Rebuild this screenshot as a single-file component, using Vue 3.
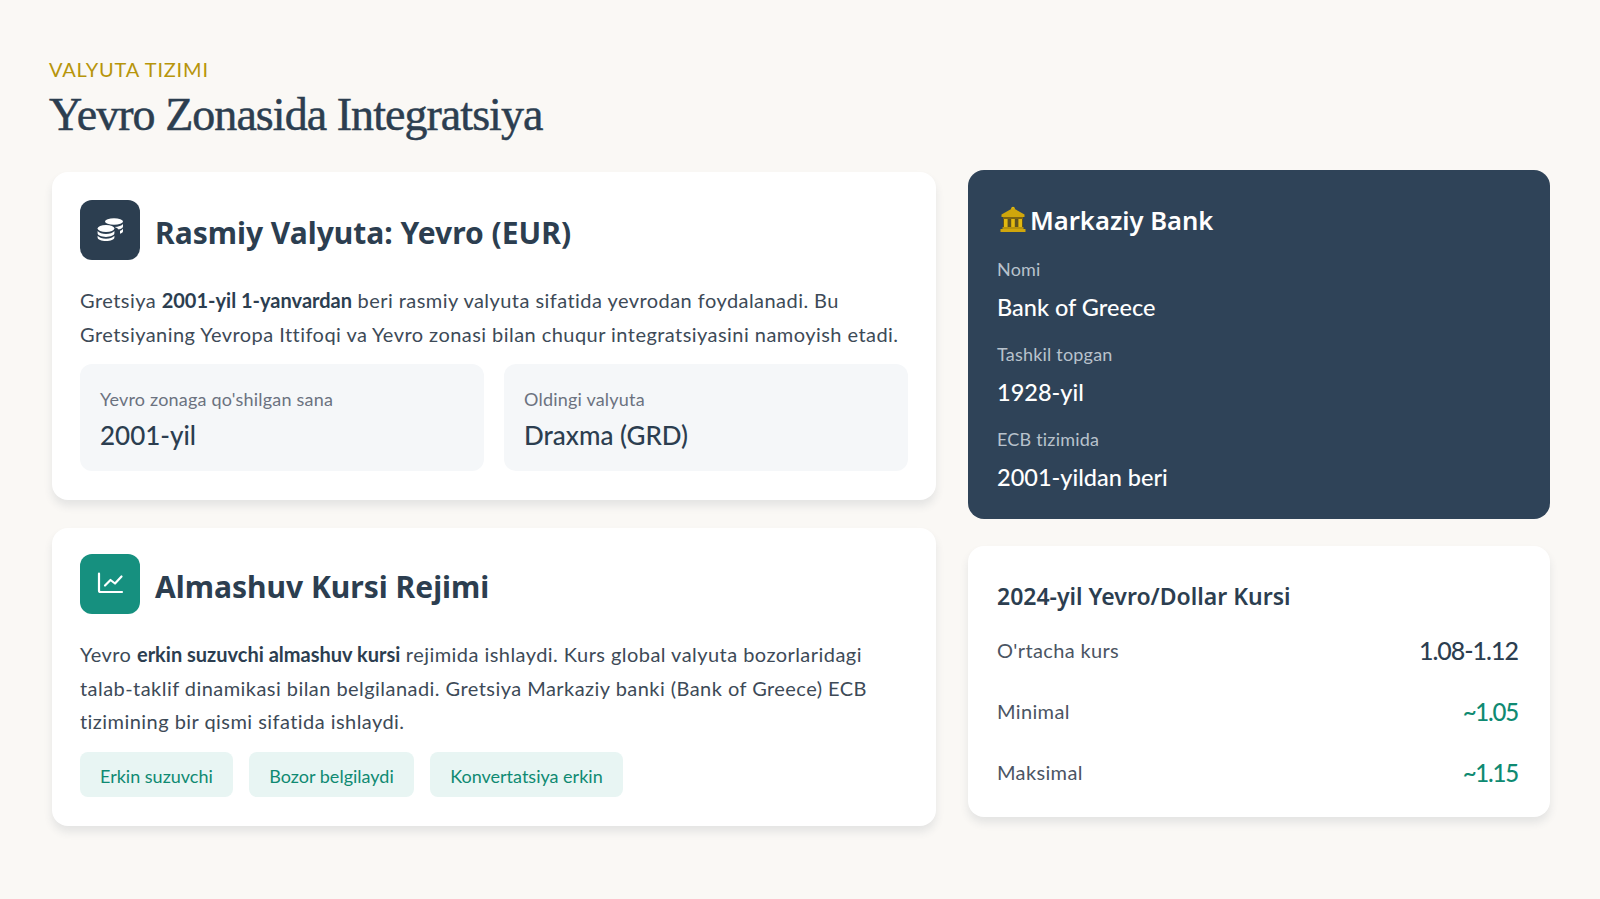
<template>
  <div class="page">
    <header class="head">
      <div class="kicker">VALYUTA TIZIMI</div>
      <h1 class="title">Yevro Zonasida Integratsiya</h1>
    </header>

    <div class="columns">
      <div class="col-left">
        <section class="card">
          <div class="card-head">
            <div class="icon icon--navy">
              <svg width="28" height="28" viewBox="0 0 28 28">
                <g fill="#fff">
                  <ellipse cx="18" cy="5.500" rx="9" ry="3.200" />
                  <path d="M27 8v2.400c0 1.300-1.800 2.400-4.400 3-.8-1.100-2.200-1.900-4-2.500 3.800-.1 7-1.200 8.400-2.900z" />
                  <path d="M27 12.400v2.800c0 1-1.200 1.900-3 2.500v-2.900c1.300-.5 2.400-1.400 3-2.400z" />
                  <ellipse cx="10" cy="12.500" rx="8.400" ry="3.500" />
                  <path d="M1.600 15c1.600 1.800 4.800 3 8.400 3s6.800-1.200 8.400-3v2.300c0 2-3.800 3.600-8.400 3.600s-8.400-1.600-8.400-3.600z" />
                  <path d="M1.600 19.800c1.600 1.800 4.800 3 8.400 3s6.800-1.200 8.400-3v1.600c0 2-3.800 3.600-8.400 3.600s-8.400-1.600-8.400-3.600z" />
                </g>
              </svg>
            </div>
            <h2 class="card-title">Rasmiy Valyuta: Yevro (EUR)</h2>
          </div>
          <p class="text">
            Gretsiya <strong>2001-yil 1-yanvardan</strong> beri rasmiy valyuta sifatida yevrodan foydalanadi. Bu
            Gretsiyaning Yevropa Ittifoqi va Yevro zonasi bilan chuqur integratsiyasini namoyish etadi.
          </p>
          <div class="facts">
            <div v-for="f in facts" :key="f.label" class="fact">
              <div class="fact-label">{{ f.label }}</div>
              <div class="fact-value">{{ f.value }}</div>
            </div>
          </div>
        </section>

        <section class="card">
          <div class="card-head">
            <div class="icon icon--teal">
              <svg width="28" height="28" viewBox="0 0 28 28" fill="none" stroke="#fff" stroke-width="2.200" stroke-linecap="round" stroke-linejoin="round">
                <path d="M3 3.500v17a1.500 1.500 0 0 0 1.500 1.500H26" />
                <path d="M9 15.500l5.500-5.500 4.500 3.500 6.500-7" />
              </svg>
            </div>
            <h2 class="card-title">Almashuv Kursi Rejimi</h2>
          </div>
          <p class="text">
            Yevro <strong>erkin suzuvchi almashuv kursi</strong> rejimida ishlaydi. Kurs global valyuta bozorlaridagi
            talab-taklif dinamikasi bilan belgilanadi. Gretsiya Markaziy banki (Bank of Greece) ECB
            tizimining bir qismi sifatida ishlaydi.
          </p>
          <div class="tags">
            <span v-for="t in tags" :key="t" class="tag">{{ t }}</span>
          </div>
        </section>
      </div>

      <div class="col-right">
        <section class="bank">
          <h3 class="bank-title">
            <svg class="bank-icon" width="26" height="26" viewBox="0 0 26 26">
              <circle cx="13" cy="2.500" r="1.800" fill="#e3b90f" />
              <path d="M13 2L1.500 8.500V11h23V8.500z" fill="#d0a60c" />
              <rect x="3" y="11" width="20" height="2" fill="#7d6412" />
              <rect x="3" y="13" width="20" height="8" fill="#5f5220" />
              <g fill="#e3b90f">
                <rect x="4" y="13" width="3.600" height="8" />
                <rect x="11.200" y="13" width="3.600" height="8" />
                <rect x="18.400" y="13" width="3.600" height="8" />
              </g>
              <rect x="2.500" y="21" width="21" height="2" fill="#b8930c" />
              <rect x="0.500" y="23" width="25" height="3" fill="#d0a60c" />
            </svg>
            Markaziy Bank
          </h3>
          <div v-for="b in bankRows" :key="b.label" class="bank-row">
            <div class="bank-label">{{ b.label }}</div>
            <div class="bank-value">{{ b.value }}</div>
          </div>
        </section>

        <section class="rates">
          <h3 class="rates-title">2024-yil Yevro/Dollar Kursi</h3>
          <div v-for="r in rates" :key="r.label" class="rate-row">
            <span class="rate-label">{{ r.label }}</span>
            <span class="rate-value" :class="{ 'rate-value--teal': r.teal }">{{ r.value }}</span>
          </div>
        </section>
      </div>
    </div>
  </div>
</template>

<script setup>
const facts = [
  { label: "Yevro zonaga qo'shilgan sana", value: '2001-yil' },
  { label: 'Oldingi valyuta', value: 'Draxma (GRD)' }
]

const tags = ['Erkin suzuvchi', 'Bozor belgilaydi', 'Konvertatsiya erkin']

const bankRows = [
  { label: 'Nomi', value: 'Bank of Greece' },
  { label: 'Tashkil topgan', value: '1928-yil' },
  { label: 'ECB tizimida', value: '2001-yildan beri' }
]

const rates = [
  { label: "O'rtacha kurs", value: '1.08-1.12', teal: false },
  { label: 'Minimal', value: '~1.05', teal: true },
  { label: 'Maksimal', value: '~1.15', teal: true }
]
</script>

<style scoped>
.page {
  width: 1600px;
  height: 899px;
  box-sizing: border-box;
  padding: 56px 50px 0 49px;
  background: #faf8f5;
  font-family: 'Lato', 'Noto Sans', sans-serif;
  color: #2c3e50;
  overflow: hidden;
}

.kicker {
  font-size: 20px;
  line-height: 26px;
  letter-spacing: 0.8px;
  color: #b7950b;
}

.title {
  margin: 5px 0 0;
  font-family: 'Liberation Serif', serif;
  font-size: 46px;
  line-height: 56px;
  font-weight: 400;
  letter-spacing: -0.95px;
  -webkit-text-stroke: 0.5px #2c3e50;
  color: #2c3e50;
}

.columns {
  display: grid;
  grid-template-columns: 887px 582px;
  column-gap: 32px;
  margin-top: 27px;
}

.col-left {
  padding: 2px 0 0 3px;
  display: flex;
  flex-direction: column;
  gap: 28px;
}

.col-right {
  display: flex;
  flex-direction: column;
  gap: 27px;
}

.card {
  background: #fff;
  border-radius: 16px;
  padding: 28px 28px 29px;
  box-shadow: 0 6px 8px rgba(44, 62, 80, 0.1);
}

.card + .card {
  padding-top: 26px;
}

.card-head {
  display: flex;
  align-items: center;
  gap: 15px;
}

.icon {
  width: 60px;
  height: 60px;
  border-radius: 12px;
  display: flex;
  align-items: center;
  justify-content: center;
  flex-shrink: 0;
}

.icon--navy {
  background: #2c3e50;
}

.icon--teal {
  background: #16907f;
}

.card-title {
  margin: 0;
  padding-top: 4px;
  font-family: 'Noto Sans', sans-serif;
  font-size: 30px;
  font-weight: 700;
  color: #2c3e50;
}

.text {
  margin: 24px 0 13px;
  font-size: 20px;
  line-height: 33.600px;
  letter-spacing: 0.45px;
  color: #3d4a57;
}

.text strong {
  font-weight: 700;
  letter-spacing: 0;
  color: #2c3e50;
}

.facts {
  display: grid;
  grid-template-columns: 1fr 1fr;
  gap: 20px;
}

.fact {
  background: #f5f7f9;
  border-radius: 12px;
  padding: 23px 20px 0;
  height: 107px;
  box-sizing: border-box;
}

.fact-label {
  font-size: 18px;
  line-height: 24px;
  letter-spacing: 0.2px;
  color: #6b7280;
}

.fact-value {
  margin-top: 7px;
  font-size: 26px;
  line-height: 34px;
  font-weight: 500;
  color: #2c3e50;
}

.tags {
  display: flex;
  gap: 16.500px;
}

.tag {
  height: 45px;
  line-height: 49px;
  padding: 0 20px;
  background: #e8f5f3;
  border-radius: 8px;
  font-size: 18px;
  color: #0f8a72;
}

.bank {
  background: #2f4358;
  border-radius: 16px;
  padding: 33px 30px 0 29px;
  height: 349px;
  box-sizing: border-box;
  color: #fff;
}

.bank-title {
  margin: 0 0 17px;
  display: flex;
  align-items: center;
  font-family: 'Noto Sans', sans-serif;
  font-size: 25.600px;
  line-height: 36px;
  font-weight: 600;
}

.bank-icon {
  margin: 0 4px 4px 3px;
}

.bank-row {
  margin-bottom: 17px;
}

.bank-label {
  font-size: 18px;
  line-height: 26px;
  letter-spacing: 0.2px;
  color: #b8c2cc;
}

.bank-value {
  margin-top: 8px;
  font-size: 23.500px;
  line-height: 34px;
  font-weight: 500;
}

.rates {
  background: #fff;
  border-radius: 16px;
  padding: 34px 32px 15px 29px;
  box-shadow: 0 6px 8px rgba(44, 62, 80, 0.1);
}

.rates-title {
  margin: 0 0 7px;
  font-family: 'Noto Sans', sans-serif;
  font-size: 23px;
  line-height: 32px;
  font-weight: 600;
  color: #2c3e50;
}

.rate-row {
  display: flex;
  justify-content: space-between;
  align-items: center;
  height: 61px;
}

.rate-label {
  font-size: 20px;
  letter-spacing: 0.35px;
  color: #4b5563;
}

.rate-value {
  font-size: 25px;
  font-weight: 500;
  letter-spacing: -1px;
  color: #2c3e50;
}

.rate-value--teal {
  padding-top: 2px;
  font-size: 24px;
  letter-spacing: -1.200px;
  color: #0f8a72;
}
</style>
